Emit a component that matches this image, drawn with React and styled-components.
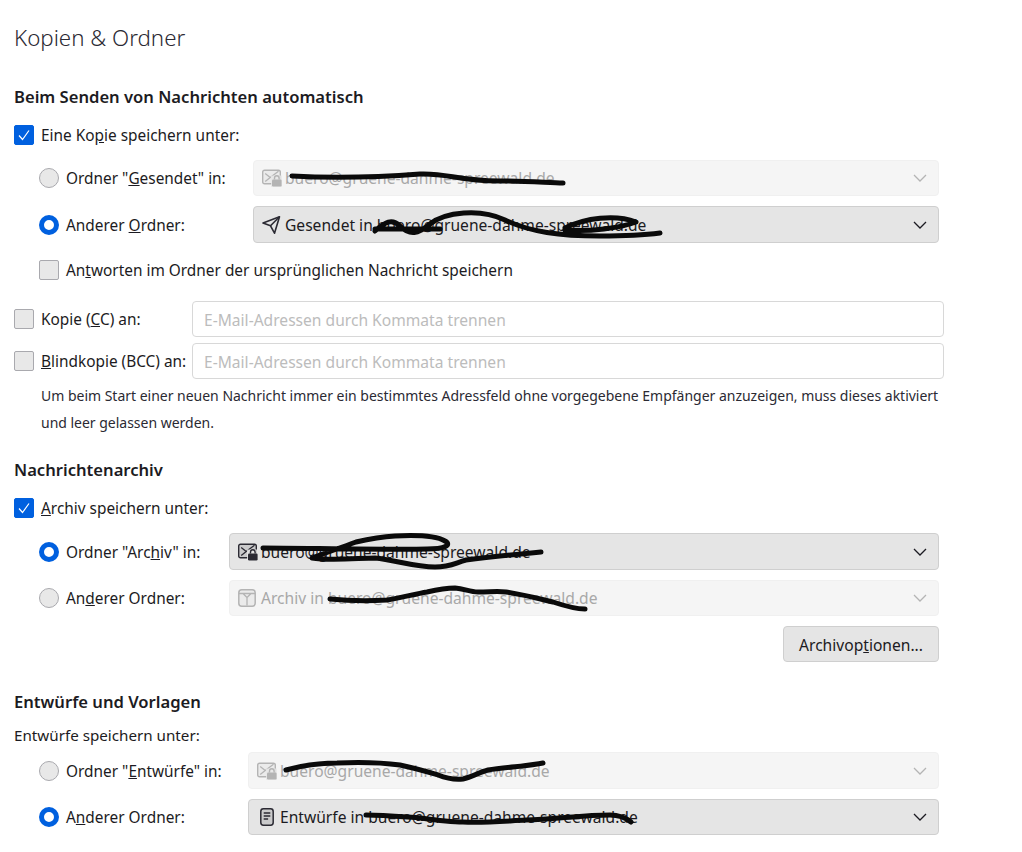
import React from "react";
import styled, { createGlobalStyle, css } from "styled-components";

const GlobalStyle = createGlobalStyle`
  html, body {
    margin: 0;
    background: #fff;
    color: #1c1b22;
    font-family: "Noto Sans", "Open Sans", sans-serif;
    font-size: 15.4px;
  }
`;

const MailLockIcon = ({ color }) => (
  <svg width="20" height="18" viewBox="0 0 20 18" fill="none" stroke={color}>
    <rect x="0.7" y="1.2" width="17.6" height="13.6" rx="1.8" fill={color} fillOpacity="0.14" strokeWidth="1.4" />
    <path d="M3.2 4.5l5 4-5 4M16.5 2.2L8.2 8.5" strokeWidth="1.3" />
    <rect x="9" y="6.5" width="11" height="11.5" fill="#e8e8e8" fillOpacity="0.85" stroke="none" />
    <rect x="10" y="10.5" width="9.6" height="7" rx="1.2" fill={color} stroke="none" />
    <path d="M12.5 10.5V9a2.3 2.3 0 0 1 4.6 0v1.5" strokeWidth="1.4" />
  </svg>
);

const SendIcon = ({ color }) => (
  <svg width="20" height="18" viewBox="0 0 20 18" fill="none" stroke={color} strokeWidth="1.6" strokeLinejoin="round">
    <path d="M1 7L17.5 0.8 12.5 17.2 8.5 9.8 1 7Z" />
    <path d="M8.5 9.8L17.5 0.8" />
  </svg>
);

const ArchiveIcon = ({ color }) => (
  <svg width="20" height="18" viewBox="0 0 20 18" fill="none" stroke={color} strokeWidth="1.5">
    <rect x="0.8" y="0.8" width="16.4" height="16.4" rx="3" fill={color} fillOpacity="0.14" />
    <path d="M1 4.5h16M5 4.5l4 4 4-4M9 8.5v8" strokeWidth="1.3" />
  </svg>
);

const DraftIcon = ({ color }) => (
  <svg width="20" height="18" viewBox="0 0 20 18" fill="none" stroke={color} strokeWidth="1.5">
    <rect x="3.8" y="0.8" width="12.4" height="16.4" rx="2.6" fill={color} fillOpacity="0.14" />
    <path d="M6.7 5h6.6M6.7 8h6.6M6.7 11h4.4" strokeWidth="1.3" />
  </svg>
);

const Page = styled.div`
  position: relative;
  width: 1022px;
  height: 852px;
  box-sizing: border-box;
  padding: 0 78px 0 14px;
  overflow: hidden;
`;

const Title = styled.h1`
  margin: 0;
  padding-top: 23px;
  height: 53px;
  box-sizing: border-box;
  font-size: 22.3px;
  line-height: 30px;
  font-weight: 300;
  color: #2b2a33;
`;

const Heading = styled.h2`
  margin: ${(p) => p.$top}px 0 0;
  font-size: 16.6px;
  line-height: 22px;
  font-weight: 600;
  color: #1c1b22;
`;

const Row = styled.label`
  display: flex;
  align-items: center;
  margin-top: ${(p) => p.$top || 0}px;
  padding-left: ${(p) => (p.$indent ? 25 : 0)}px;
  padding-right: ${(p) => (p.$indent ? 5 : 0)}px;
  min-height: ${(p) => p.$height || 20}px;
`;

const Text = styled.span`
  margin-left: 7px;
  padding-top: 2px;
  width: ${(p) => (p.$width ? `${p.$width}px` : "auto")};
  flex: none;
  white-space: nowrap;
  line-height: 20px;
`;

const PlainText = styled.div`
  margin-top: ${(p) => p.$top}px;
  font-size: 15.2px;
  line-height: 20px;
`;

const Checkbox = styled.span`
  flex: none;
  width: 20px;
  height: 20px;
  box-sizing: border-box;
  border-radius: 2px;
  border: 1px solid ${(p) => (p.$checked ? "#0060df" : "#a9a9ae")};
  background: ${(p) => (p.$checked ? "#0060df" : "#e8e8e8")};
  display: flex;
  align-items: center;
  justify-content: center;
`;

const Radio = styled.span`
  flex: none;
  width: 20px;
  height: 20px;
  box-sizing: border-box;
  border-radius: 50%;
  ${(p) =>
    p.$checked
      ? css`
          border: 5px solid #0060df;
          background: #fff;
        `
      : css`
          border: 1px solid #a9a9ae;
          background: #e8e8e8;
        `}
`;

const Select = styled.div`
  flex: 1;
  height: ${(p) => p.$height}px;
  box-sizing: border-box;
  display: flex;
  align-items: center;
  padding: 0 11px 0 8px;
  gap: 3px;
  border-radius: 4px;
  font-size: 15.6px;
  white-space: nowrap;
  ${(p) =>
    p.$disabled
      ? css`
          background: #f5f5f5;
          border: 1px solid #f0f0f0;
          color: #a8a8a8;
        `
      : css`
          background: #e5e5e5;
          border: 1px solid #cfcfcf;
          color: #1c1b22;
        `}
`;

const SelectLabel = styled.span`
  flex: 1;
`;

const TextInput = styled.input`
  flex: 1;
  min-width: 0;
  height: 36px;
  box-sizing: border-box;
  padding: 2px 11px 0;
  border: 1px solid #d8d8d8;
  border-radius: 4px;
  background: #fff;
  font: inherit;
  font-size: 15.6px;

  &::placeholder {
    color: #bcbcbc;
    opacity: 1;
  }
`;

const Help = styled.p`
  margin: 3px 4px 0 27px;
  font-size: 14px;
  letter-spacing: -0.001em;
  line-height: 27px;
  color: #2b2a33;
`;

const ButtonRow = styled.div`
  display: flex;
  justify-content: flex-end;
  padding-right: 5px;
  margin-top: 10px;
`;

const Button = styled.button`
  width: 156px;
  height: 36px;
  box-sizing: border-box;
  padding: 2px 0 0;
  border: 1px solid #cfcfcf;
  border-radius: 4px;
  background: #e5e5e5;
  color: #1c1b22;
  font: inherit;
  font-size: 15.6px;
`;

const Scribbles = styled.svg`
  position: absolute;
  top: 0;
  left: 0;
  pointer-events: none;
`;

const Check = () => (
  <svg width="14" height="14" viewBox="0 0 14 14" fill="none" stroke="#fff" strokeWidth="1.2">
    <path d="M2 7.5L5.5 11.5 12 2.5" />
  </svg>
);

const Chevron = ({ color }) => (
  <svg width="14" height="8" viewBox="0 0 14 8" fill="none" stroke={color} strokeWidth="1.3">
    <path d="M1 1l6 6 6-6" />
  </svg>
);

const Dropdown = ({ disabled, height = 37, icon: Icon, children }) => {
  const color = disabled ? "#b4b4b4" : "#2b2a33";
  return (
    <Select $disabled={disabled} $height={height}>
      <Icon color={color} />
      <SelectLabel>{children}</SelectLabel>
      <Chevron color={disabled ? "#b4b4b4" : "#1c1b22"} />
    </Select>
  );
};

const App = () => (
  <Page>
    <GlobalStyle />
    <Title>Kopien &amp; Ordner</Title>

    <Heading $top={33}>Beim Senden von Nachrichten automatisch</Heading>
    <Row $top={16}>
      <Checkbox $checked><Check /></Checkbox>
      <Text>Eine Ko<u>p</u>ie speichern unter:</Text>
    </Row>
    <Row $indent $top={14} $height={36}>
      <Radio />
      <Text $width={187}>Ordner "<u>G</u>esendet" in:</Text>
      <Dropdown disabled height={36} icon={MailLockIcon}>buero@gruene-dahme-spreewald.de</Dropdown>
    </Row>
    <Row $indent $top={10} $height={37}>
      <Radio $checked />
      <Text $width={187}>Anderer <u>O</u>rdner:</Text>
      <Dropdown icon={SendIcon}>Gesendet in buero@gruene-dahme-spreewald.de</Dropdown>
    </Row>
    <Row $indent $top={16}>
      <Checkbox />
      <Text>An<u>t</u>worten im Ordner der ursprünglichen Nachricht speichern</Text>
    </Row>

    <Row $top={20} $height={36}>
      <Checkbox />
      <Text $width={151}>Kopie (<u>C</u>C) an:</Text>
      <TextInput placeholder="E-Mail-Adressen durch Kommata trennen" />
    </Row>
    <Row $top={6} $height={36}>
      <Checkbox />
      <Text $width={151}><u>B</u>lindkopie (BCC) an:</Text>
      <TextInput placeholder="E-Mail-Adressen durch Kommata trennen" />
    </Row>
    <Help>
      Um beim Start einer neuen Nachricht immer ein bestimmtes Adressfeld ohne vorgegebene Empfänger anzuzeigen, muss dieses aktiviert und leer gelassen werden.
    </Help>

    <Heading $top={23}>Nachrichtenarchiv</Heading>
    <Row $top={16}>
      <Checkbox $checked><Check /></Checkbox>
      <Text><u>A</u>rchiv speichern unter:</Text>
    </Row>
    <Row $indent $top={14} $height={37}>
      <Radio $checked />
      <Text $width={163}>Ordner "Arc<u>h</u>iv" in:</Text>
      <Dropdown icon={MailLockIcon}>buero@gruene-dahme-spreewald.de</Dropdown>
    </Row>
    <Row $indent $top={10} $height={36}>
      <Radio />
      <Text $width={163}>An<u>d</u>erer Ordner:</Text>
      <Dropdown disabled height={36} icon={ArchiveIcon}>Archiv in buero@gruene-dahme-spreewald.de</Dropdown>
    </Row>
    <ButtonRow>
      <Button>Archivop<u>t</u>ionen...</Button>
    </ButtonRow>

    <Heading $top={29}>Entwürfe und Vorlagen</Heading>
    <PlainText $top={12}>Entwürfe speichern unter:</PlainText>
    <Row $indent $top={7} $height={37}>
      <Radio />
      <Text $width={182}>Ordner "<u>E</u>ntwürfe" in:</Text>
      <Dropdown disabled icon={MailLockIcon}>buero@gruene-dahme-spreewald.de</Dropdown>
    </Row>
    <Row $indent $top={10} $height={36}>
      <Radio $checked />
      <Text $width={182}>A<u>n</u>derer Ordner:</Text>
      <Dropdown height={36} icon={DraftIcon}>Entwürfe in buero@gruene-dahme-spreewald.de</Dropdown>
    </Row>

    {/* marker strokes drawn over the address in the selects */}
    <Scribbles width="1022" height="852" viewBox="0 0 1022 852" fill="none" stroke="#0a0a0a" strokeWidth="5" strokeLinecap="round" strokeLinejoin="round">
      <path d="M292 176C330 178 380 177 420 174C450 173 455 181 500 181C530 181 550 183 563 183" />
      <path d="M375 231C385 222 392 218 400 226C410 236 418 234 430 224C445 212 480 208 505 220C530 232 560 236 600 236C625 236 645 235 660 233M375 229L440 229M565 228C585 218 615 214 636 222C620 228 590 232 565 230" />
      <path d="M263 548C300 548 390 550 427 549C445 549 452 545 445 541C435 535 415 535 395 536C380 537 365 540 356 542C340 548 325 553 312 558C330 561 360 558 375 558C395 560 415 567 435 567C450 567 455 563 466 560C490 557 520 554 541 552" />
      <path d="M330 599C350 601 370 601 387 600C400 598 415 594 427 592C440 589 447 588 455 588C465 589 470 592 478 592C490 592 498 591 506 592C525 595 540 599 553 602C565 606 575 609 585 609" />
      <path d="M286 770C300 766 320 763 337 763C360 762 385 763 400 765C415 768 428 772 438 775C448 779 455 780 463 779C472 777 480 772 488 770C505 767 530 766 543 763" />
      <path d="M366 815C385 815 405 817 421 818C435 820 450 822 463 822C485 823 505 821 526 820C555 819 585 815 610 815C620 815 626 818 631 822" />
    </Scribbles>
  </Page>
);

export default App;
